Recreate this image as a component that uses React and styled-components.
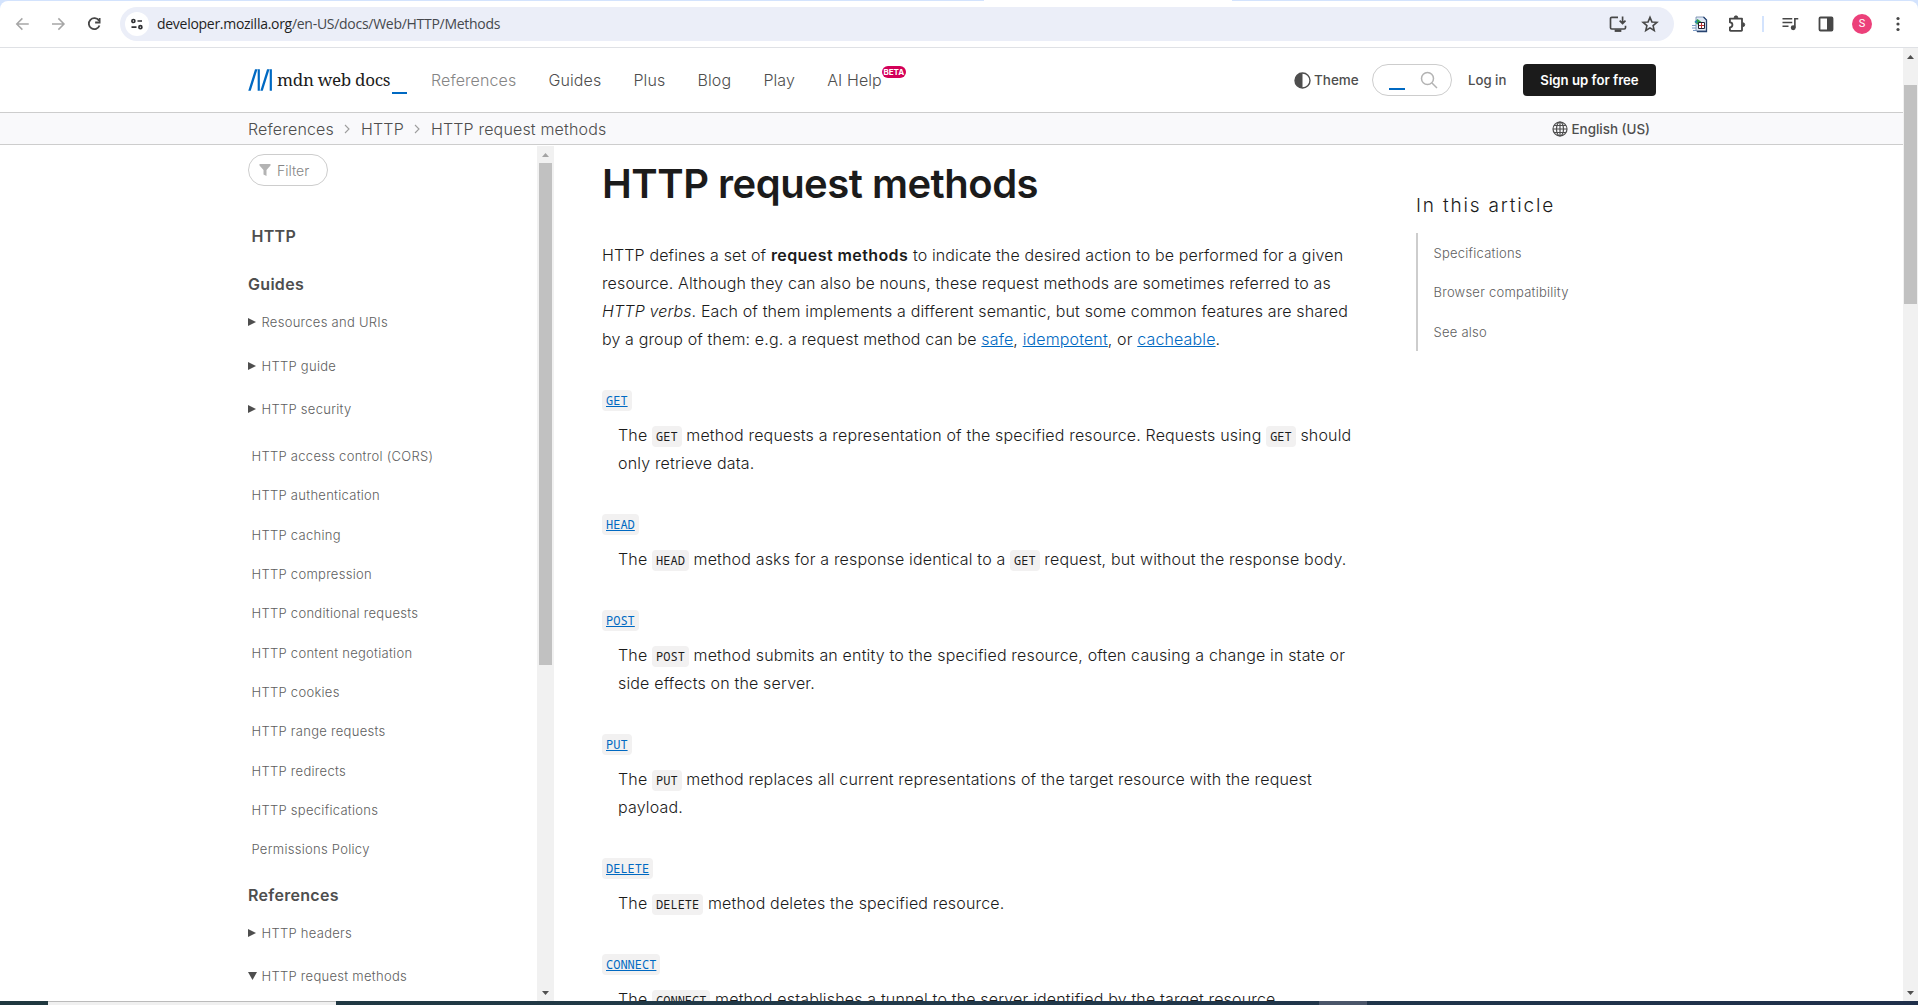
import React from "react";
import styled, { createGlobalStyle, css } from "styled-components";

const Global = createGlobalStyle`
  * { box-sizing: border-box; }
  html, body { margin: 0; padding: 0; }
  body { width: 1918px; height: 1005px; overflow: hidden; background: #fff; font-family: Inter, "Liberation Sans", sans-serif; font-weight: 350; color: #1b1b1b; }
  a { color: inherit; text-decoration: none; }
  h1, h2, h3, p, ul, dl, dd, dt { margin: 0; padding: 0; font-weight: 350; }
  b { font-weight: 600; }
  ul { list-style: none; }
  svg { display: block; flex: none; }
`;

const Screen = styled.div`
  width: 1918px; height: 1005px; display: flex; flex-direction: column; overflow: hidden;
`;

/* Browser toolbar */
const TabEdge = styled.div`height: 1px; flex: none; background: #d3e3fd; display: flex;`;
const ActiveTab = styled.div`margin-left: 984px; width: 248px; background: #fff;`;
const ToolbarWrap = styled.div`background: #d3e3fd; flex: none;`;
const Toolbar = styled.div`
  height: 47px; background: #fff; border-bottom: 1px solid #dfe1e5; border-radius: 8px 8px 0 0;
  display: flex; align-items: center; padding: 0 8px 0 13px;
`;
const NavButtons = styled.div`display: flex; gap: 18px; width: 107px;`;
const Omnibox = styled.div`
  width: 1554px; height: 34px; border-radius: 17px; background: #ebeef8; display: flex; align-items: center; padding: 0 14px 0 5px;
`;
const SiteInfo = styled.div`
  width: 24px; height: 24px; border-radius: 50%; background: #fff; display: flex; align-items: center; justify-content: center; margin-right: 8px;
`;
const Url = styled.div`
  flex: 1; font: 14px/20px "Open Sans", sans-serif; letter-spacing: -0.28px; color: #45484d; white-space: pre;
  b { font-weight: 400; color: #1f1f1f; }
`;
const OmniActions = styled.div`display: flex; gap: 12px;`;
const Extensions = styled.div`display: flex; align-items: center; flex: 1; padding-left: 17px;`;
const ExtSlot = styled.div`width: ${(p) => p.$w}px; flex: none; display: flex;`;
const Avatar = styled.div`
  width: 20px; height: 20px; border-radius: 50%; background: #ec407a; color: #fff; font: 11px/20px Roboto, sans-serif; text-align: center;
`;

/* Page frame */
const Viewport = styled.div`flex: 1; min-height: 0; display: flex;`;
const Page = styled.div`width: 1903px; display: flex; flex-direction: column;`;
const Scrollbar = styled.div`
  width: ${(p) => p.$w}px; flex: none; background: #f1f1f1; display: flex; flex-direction: column; align-items: center; justify-content: space-between;
`;
const ScrollUpper = styled.div`display: flex; flex-direction: column; align-items: center; gap: ${(p) => p.$gap || 0}px;`;
const Arrow = styled.div`height: ${(p) => p.$h}px; display: flex; align-items: center;`;
const Thumb = styled.div`width: 13px; height: ${(p) => p.$h}px; background: #c1c1c1;`;

/* Site header */
const Header = styled.header`
  height: 65px; flex: none; border-bottom: 1px solid #cdcdcd; padding: 0 247px 0 248px; display: flex; align-items: center;
`;
const Logo = styled.a`display: flex; align-items: center; width: 183px; height: 40px;`;
const LogoText = styled.span`
  font: 17px/24px "Noto Serif", "Liberation Serif", serif; letter-spacing: -0.3px; margin-left: 5px; width: 115px; white-space: nowrap;
`;
const LogoBar = styled.i`width: 15px; height: 2px; background: #0069c2; margin-top: 25px;`;
const MainNav = styled.nav`display: flex; gap: 32.2px; flex: 1; font-size: 16px; line-height: 24px; letter-spacing: 0.1px; color: #4e4e4e;`;
const NavLink = styled.a`position: relative; color: ${(p) => (p.$active ? "#858585" : "#4e4e4e")};`;
const Beta = styled.sup`
  position: absolute; left: 100%; top: -2px; height: 12px; width: 24px; border-radius: 6px; background: #d30058; color: #fff;
  font: 700 8px/12px Inter, sans-serif; letter-spacing: 0; text-align: center;
`;
const Theme = styled.button`
  border: 0; background: none; padding: 0; display: flex; align-items: center; gap: 3px; font: 500 13.5px/20px Inter, sans-serif; color: #4e4e4e; width: 78px;
`;
const SearchBox = styled.div`
  width: 80px; height: 32px; border: 1px solid #cdcdcd; border-radius: 16px; display: flex; align-items: center; padding: 0 13px 0 16px; justify-content: space-between;
`;
const Caret = styled.i`width: 16px; height: 2px; background: #0069c2; margin-top: 17px;`;
const Login = styled.a`font: 500 13.2px/20px Inter, sans-serif; color: #4e4e4e; margin: -1px 0 0 16px; width: 55px;`;
const SignUp = styled.a`
  width: 133px; height: 32px; border-radius: 4px; background: #1b1b1b; color: #fff; font: 600 13.2px/33px Inter, sans-serif; text-align: center;
`;

const CrumbBar = styled.div`
  height: 32px; flex: none; background: #f9f9fb; border-bottom: 1px solid #cdcdcd; padding: 0 253px 0 248px; display: flex; align-items: center;
  justify-content: space-between; color: #4e4e4e;
`;
const Crumbs = styled.div`display: flex; align-items: center; font-size: 16px; line-height: 24px; letter-spacing: 0.17px; gap: 8.5px;`;
const Language = styled.div`display: flex; align-items: center; gap: 4px; font: 500 13.4px/20px Inter, sans-serif;`;

/* Main columns */
const Columns = styled.div`flex: 1; min-height: 0; display: flex; padding-left: 248px; overflow: hidden;`;
const Sidebar = styled.aside`width: 306px; flex: none; display: flex; padding-top: 1px;`;
const SidebarBody = styled.div`width: 289px; color: #5e5e5e; overflow: hidden; padding-top: 8px;`;
const Filter = styled.div`
  width: 80px; height: 32px; border: 1px solid #cdcdcd; border-radius: 16px; display: flex; align-items: center; gap: 6px; padding-left: 10px;
  color: #858585; font-size: 14px;
`;
const SideTitle = styled.h2`font-size: 16px; line-height: 24px; font-weight: 600; color: #4e4e4e; letter-spacing: 0.3px; padding-left: ${(p) => p.$indent || 0}px; margin-top: ${(p) => p.$top}px;`;
const SideGroup = styled.ul`margin-top: ${(p) => p.$top}px;`;
const sideText = css`font-size: 13px; letter-spacing: 0.28px; white-space: nowrap; display: flex; align-items: center;`;
const SideToggle = styled.li`${sideText} height: 43.75px;`;
const Marker = styled.span`width: 13.5px; flex: none;`;
const SideLink = styled.li`${sideText} height: 39.33px; padding-left: 3.5px;`;

const Article = styled.main`width: 760px; margin-left: 48px; flex: none;`;
const Title = styled.h1`font-size: 40px; line-height: 48px; font-weight: 600; margin-top: 15px; letter-spacing: -0.5px;`;
const Intro = styled.p`
  font-size: 16px; line-height: 28px; letter-spacing: 0.135px; margin-top: 33px; white-space: pre-line;
  b { letter-spacing: 0.42px; }
`;
const Link = styled.a`color: #0069c2; text-decoration: underline;`;
const Term = styled.dt`line-height: 28px; height: 28px; margin-top: 32px;`;
const Def = styled.dd`padding-left: 16px; font-size: 16px; line-height: 28px; letter-spacing: 0.165px; margin-top: 8px; white-space: pre-line;`;
const Code = styled.code`
  font-family: "Noto Sans Mono", "DejaVu Sans Mono", monospace; font-weight: 400; font-size: 12px; line-height: 0; letter-spacing: 0;
  background: #f2f1f1; padding: 2px 4px; border-radius: 4px;
`;

const Toc = styled.aside`margin-left: 54px; padding-top: 49px; width: 240px;`;
const TocTitle = styled.h2`font-size: 19px; line-height: 24px; letter-spacing: 1.82px;`;
const TocList = styled.ul`margin-top: 15px; border-left: 2px solid #cdcdcd; height: 118px;`;
const TocItem = styled.li`height: 39.5px; display: flex; align-items: center; padding-left: 15.5px; font-size: 13px; letter-spacing: 0.24px; color: #5e5e5e;`;

const Taskbar = styled.div`height: 4px; flex: none; display: flex; background: linear-gradient(90deg, #20383f, #21394a 50%, #1f2f4a);`;
const TaskSearch = styled.div`width: 288px; margin-left: 48px; background: #f0f0f0; border-top: 1px solid #bbb;`;
const TaskActive = styled.div`width: 48px; margin-left: 983px; background: #4b566a;`;

const Stroke = ({ s = 16, c = "#474747", w = 2, box = 24, children }) => (
  <svg width={s} height={s} viewBox={`0 0 ${box} ${box}`} fill="none" stroke={c} strokeWidth={w}>{children}</svg>
);
const Tri = ({ dir, w, h, c }) => (
  <svg width={w} height={h} viewBox="0 0 10 10" preserveAspectRatio="none" fill={c}>
    <path d={{ up: "M0 10L5 0L10 10Z", down: "M0 0H10L5 10Z", right: "M0 0L10 5L0 10Z" }[dir]} />
  </svg>
);

const mainLinks = ["References", "Guides", "Plus", "Blog", "Play", "AI Help"];
const guideToggles = ["Resources and URIs", "HTTP guide", "HTTP security"];
const guideLinks = ["HTTP access control (CORS)", "HTTP authentication", "HTTP caching", "HTTP compression", "HTTP conditional requests", "HTTP content negotiation", "HTTP cookies", "HTTP range requests", "HTTP redirects", "HTTP specifications", "Permissions Policy"];
const methods = [
  ["GET", <>The <Code>GET</Code> method requests a representation of the specified resource. Requests using <Code>GET</Code> should{"\n"}only retrieve data.</>],
  ["HEAD", <>The <Code>HEAD</Code> method asks for a response identical to a <Code>GET</Code> request, but without the response body.</>],
  ["POST", <>The <Code>POST</Code> method submits an entity to the specified resource, often causing a change in state or{"\n"}side effects on the server.</>],
  ["PUT", <>The <Code>PUT</Code> method replaces all current representations of the target resource with the request{"\n"}payload.</>],
  ["DELETE", <>The <Code>DELETE</Code> method deletes the specified resource.</>],
  ["CONNECT", <>The <Code>CONNECT</Code> method establishes a tunnel to the server identified by the target resource.</>],
];

function BrowserBar() {
  return (
    <>
      <TabEdge><ActiveTab /></TabEdge>
      <ToolbarWrap>
        <Toolbar>
          <NavButtons>
            <Stroke s={18} c="#a6a6a6"><path d="M21 12H5M12.500 4.500L5 12l7.500 7.500" /></Stroke>
            <Stroke s={18} c="#a6a6a6"><path d="M4 12h16M12.500 4.500L20 12l-7.500 7.500" /></Stroke>
            <Stroke s={18} w={2.4}><path d="M18.500 7.500A7.300 7.300 0 1 0 19.300 14M19.500 4v6h-6" /></Stroke>
          </NavButtons>
          <Omnibox>
            <SiteInfo>
              <Stroke s={14} box={14} c="#303134" w={1.7}><circle cx="3.4" cy="4" r="1.500" /><path d="M7.500 4h4.500M1.500 10.200h5" /><circle cx="10.400" cy="10.200" r="1.500" /></Stroke>
            </SiteInfo>
            <Url><b>developer.mozilla.org</b>/en-US/docs/Web/HTTP/Methods</Url>
            <OmniActions>
              <Stroke s={20} w={2}><path d="M12 4H4.500a1.500 1.500 0 0 0-1.500 1.500v11a1.500 1.500 0 0 0 1.500 1.500h15a1.500 1.500 0 0 0 1.500-1.500V14M17.500 3v8M14 8l3.500 3.500L21 8" /><path d="M8 20h8" strokeWidth="3" /></Stroke>
              <Stroke s={20} w={1.9}><path d="M12 4l2.300 5.500 6 .5-4.600 3.900 1.400 5.900-5.100-3.200-5.100 3.200 1.400-5.900L3.700 10l6-.5z" /></Stroke>
            </OmniActions>
          </Omnibox>
          <Extensions>
            <ExtSlot $w={36}>
              <svg width="18" height="18" viewBox="0 0 18 18"><path d="M5 2h8l2.500 2.500V16H5z" fill="#dfe8f5" stroke="#6d86a8" strokeWidth=".8" /><path d="M12.500 2l3 3v11.500H6" fill="none" stroke="#27436f" strokeWidth="1.300" /><path d="M3.500 7l3-3 4 3-4 2.500z" fill="#33a34a" /><path d="M3.500 7l2-2 1 3z" fill="#2b7fd0" /><path d="M7.500 7.500h6v6h-6z" fill="#fff" stroke="#223" /><path d="M10.500 8v5M8 10.500h5" stroke="#b33" /><path d="M1 10.500h4M1 13h4M2 15.500h4" stroke="#7b9ac4" /></svg>
            </ExtSlot>
            <ExtSlot $w={35}>
              <Stroke s={20} w={2.200}><path d="M3.500 5.500h14.500V19.500a.8.8 0 0 1-.8.8H4.300a.8.8 0 0 1-.8-.8V16a3 3 0 0 0 0-6z" strokeLinejoin="round" /><path d="M8.500 4.500a2.300 2.300 0 0 1 4.600 0zM19 10.500a2.300 2.300 0 0 1 0 4.600z" fill="#474747" strokeWidth="1" /></Stroke>
            </ExtSlot>
            <ExtSlot $w={19}><svg width="2" height="16"><rect width="2" height="16" fill="#d3e3fd" /></svg></ExtSlot>
            <ExtSlot $w={37}>
              <Stroke s={18} w={2.200}><path d="M2 5h13M2 10h13M2 15h8M18.500 17V5H23" /><circle cx="16.300" cy="17" r="2.200" fill="#474747" /></Stroke>
            </ExtSlot>
            <ExtSlot $w={34}>
              <svg width="16" height="16" viewBox="0 0 16 16"><rect x="1.500" y="1.500" width="13" height="13" rx="1" fill="none" stroke="#474747" strokeWidth="1.800" /><path d="M9 1h6v14H9z" fill="#474747" /></svg>
            </ExtSlot>
            <ExtSlot $w={44}><Avatar>S</Avatar></ExtSlot>
            <svg width="4" height="16" viewBox="0 0 4 16" fill="#474747"><circle cx="2" cy="2.500" r="1.600" /><circle cx="2" cy="8" r="1.600" /><circle cx="2" cy="13.500" r="1.600" /></svg>
          </Extensions>
        </Toolbar>
      </ToolbarWrap>
    </>
  );
}

function SiteHeader() {
  return (
    <Header>
      <Logo>
        <svg width="24" height="22" viewBox="0 0 102 92" fill="#0069c2"><path d="M40.300 0L11.600 91.900H1.200L29.800 0zM50.400 0v91.900h-9.300V0zM91.500 0L62.800 91.900H52.400L81 0zM101.600 0v91.900h-9.300V0z" /></svg>
        <LogoText>mdn web docs</LogoText>
        <LogoBar />
      </Logo>
      <MainNav>
        {mainLinks.map((t, i) => <NavLink key={t} $active={i === 0}>{t}{t === "AI Help" && <Beta>BETA</Beta>}</NavLink>)}
      </MainNav>
      <Theme>
        <svg width="17" height="17" viewBox="0 0 17 17"><circle cx="8.500" cy="8.500" r="7.500" fill="none" stroke="#4e4e4e" strokeWidth="1.400" /><path d="M8.500 1a7.500 7.500 0 0 0 0 15z" fill="#4e4e4e" /></svg>
        Theme
      </Theme>
      <SearchBox>
        <Caret />
        <Stroke s={18} box={18} c="#b3b3b3" w={1.500}><circle cx="7.500" cy="7.500" r="6" /><path d="M12 12l5 5" /></Stroke>
      </SearchBox>
      <Login>Log in</Login>
      <SignUp>Sign up for free</SignUp>
    </Header>
  );
}

const Chevron = () => <Stroke s={10} box={10} c="#9e9e9e" w={1.100}><path d="M3 1l4 4-4 4" /></Stroke>;

const Toggle = ({ open, children }) => (
  <SideToggle>
    <Marker>{open ? <Tri dir="down" w={9} h={8} c="#4e4e4e" /> : <Tri dir="right" w={8} h={8} c="#4e4e4e" />}</Marker>
    {children}
  </SideToggle>
);

function SideNav() {
  return (
    <Sidebar>
      <SidebarBody>
        <Filter>
          <svg width="12" height="12" viewBox="0 0 12 12" fill="#b3b3b3"><path d="M.5 0h11v1.500L7.500 6v6l-3-1.500V6L.5 1.500z" /></svg>
          Filter
        </Filter>
        <SideTitle $indent={3.5} $top={38}>HTTP</SideTitle>
        <SideTitle $top={24}>Guides</SideTitle>
        <SideGroup $top={4}>
          {guideToggles.map((t) => <Toggle key={t}>{t}</Toggle>)}
        </SideGroup>
        <SideGroup $top={5}>
          {guideLinks.map((t) => <SideLink key={t}>{t}</SideLink>)}
        </SideGroup>
        <SideTitle $top={14}>References</SideTitle>
        <SideGroup $top={4}>
          <Toggle>HTTP headers</Toggle>
          <Toggle open>HTTP request methods</Toggle>
        </SideGroup>
      </SidebarBody>
      <Scrollbar $w={17}>
        <ScrollUpper><Arrow $h={17}><Tri dir="up" w={7} h={4} c="#a3a3a3" /></Arrow><Thumb $h={502} /></ScrollUpper>
        <Arrow $h={17}><Tri dir="down" w={7} h={4} c="#505050" /></Arrow>
      </Scrollbar>
    </Sidebar>
  );
}

export default function App() {
  return (
    <Screen>
      <Global />
      <BrowserBar />
      <Viewport>
        <Page>
          <SiteHeader />
          <CrumbBar>
            <Crumbs><a>References</a><Chevron /><a>HTTP</a><Chevron /><a>HTTP request methods</a></Crumbs>
            <Language>
              <Stroke s={16} box={16} c="#4e4e4e" w={1.200}><circle cx="8" cy="8" r="7" /><ellipse cx="8" cy="8" rx="3.500" ry="7" /><path d="M8 1v14M1 8h14M2 4.500h12M2 11.500h12" /></Stroke>
              English (US)
            </Language>
          </CrumbBar>
          <Columns>
            <SideNav />
            <Article>
              <Title>HTTP request methods</Title>
              <Intro>
                HTTP defines a set of <b>request methods</b> to indicate the desired action to be performed for a given{"\n"}resource. Although they can also be nouns, these request methods are sometimes referred to as{"\n"}<i>HTTP verbs</i>. Each of them implements a different semantic, but some common features are shared{"\n"}by a group of them: e.g. a request method can be <Link>safe</Link>, <Link>idempotent</Link>, or <Link>cacheable</Link>.
              </Intro>
              <dl>
                {methods.map(([name, text]) => (
                  <React.Fragment key={name}>
                    <Term><Link><Code>{name}</Code></Link></Term>
                    <Def>{text}</Def>
                  </React.Fragment>
                ))}
              </dl>
            </Article>
            <Toc>
              <TocTitle>In this article</TocTitle>
              <TocList>
                <TocItem>Specifications</TocItem><TocItem>Browser compatibility</TocItem><TocItem>See also</TocItem>
              </TocList>
            </Toc>
          </Columns>
        </Page>
        <Scrollbar $w={15}>
          <ScrollUpper $gap={20}><Arrow $h={17}><Tri dir="up" w={7} h={4} c="#505050" /></Arrow><Thumb $h={219} /></ScrollUpper>
          <Arrow $h={17}><Tri dir="down" w={7} h={4} c="#505050" /></Arrow>
        </Scrollbar>
      </Viewport>
      <Taskbar><TaskSearch /><TaskActive /></Taskbar>
    </Screen>
  );
}
